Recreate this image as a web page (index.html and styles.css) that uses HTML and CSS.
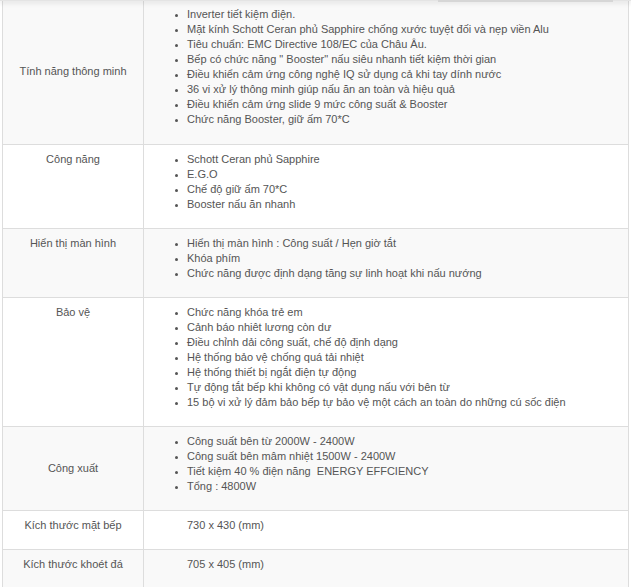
FILE: index.html
```html
<!DOCTYPE html>
<html lang="vi">
<head>
  <meta charset="UTF-8">
  <title>Thông số kỹ thuật</title>
  <link rel="stylesheet" href="styles.css">
</head>
<body>

  <div class="top-shadow">
    <span class="top-tab"></span>
  </div>

  <div class="specs">
    <table class="spec-table">
      <tbody>
        <tr class="first">
          <td class="label middle">Tính năng thông minh</td>
          <td class="value">
            <ul>
              <li>Inverter tiết kiệm điện.</li>
              <li>Mặt kính Schott Ceran phủ Sapphire chống xước tuyệt đối và nẹp viền Alu</li>
              <li>Tiêu chuẩn: EMC Directive 108/EC của Châu Âu.</li>
              <li>Bếp có chức năng " Booster" nấu siêu nhanh tiết kiệm thời gian</li>
              <li>Điều khiển cảm ứng công nghệ IQ sử dụng cả khi tay dính nước</li>
              <li>36 vi xử lý thông minh giúp nấu ăn an toàn và hiệu quả</li>
              <li>Điều khiển cảm ứng slide 9 mức công suất &amp; Booster</li>
              <li>Chức năng Booster, giữ ấm 70*C</li>
            </ul>
          </td>
        </tr>
        <tr>
          <td class="label">Công năng</td>
          <td class="value">
            <ul>
              <li>Schott Ceran phủ Sapphire</li>
              <li>E.G.O</li>
              <li>Chế độ giữ ấm 70*C</li>
              <li>Booster nấu ăn nhanh</li>
            </ul>
          </td>
        </tr>
        <tr>
          <td class="label">Hiển thị màn hình</td>
          <td class="value">
            <ul>
              <li>Hiển thị màn hình : Công suất / Hẹn giờ tắt</li>
              <li>Khóa phím</li>
              <li>Chức năng được định dạng tăng sự linh hoạt khi nấu nướng</li>
            </ul>
          </td>
        </tr>
        <tr>
          <td class="label">Bảo vệ</td>
          <td class="value">
            <ul>
              <li>Chức năng khóa trẻ em</li>
              <li>Cảnh báo nhiêt lương còn dư</li>
              <li>Điều chỉnh dải công suất, chế độ định dạng</li>
              <li>Hệ thống bảo vệ chống quá tải nhiệt</li>
              <li>Hệ thống thiết bị ngắt điện tự động</li>
              <li>Tự động tắt bếp khi không có vật dụng nấu với bên từ</li>
              <li>15 bộ vi xử lý đảm bảo bếp tự bảo vệ một cách an toàn do những cú sốc điện</li>
            </ul>
          </td>
        </tr>
        <tr>
          <td class="label middle">Công xuất</td>
          <td class="value">
            <ul>
              <li>Công suất bên từ 2000W - 2400W</li>
              <li>Công suất bên mâm nhiệt 1500W - 2400W</li>
              <li>Tiết kiệm 40 % điện năng &nbsp;ENERGY EFFCIENCY</li>
              <li>Tổng : 4800W</li>
            </ul>
          </td>
        </tr>
        <tr>
          <td class="label">Kích thước mặt bếp</td>
          <td class="value"><p>730 x 430 (mm)</p></td>
        </tr>
        <tr>
          <td class="label">Kích thước khoét đá</td>
          <td class="value"><p>705 x 405 (mm)</p></td>
        </tr>
      </tbody>
    </table>
  </div>

</body>
</html>
```

FILE: styles.css
```css
* {
  box-sizing: border-box;
  margin: 0;
  padding: 0;
}

body {
  background-color: #fff;
  font-family: "Liberation Sans", Arial, sans-serif;
  font-size: 11px;
  line-height: 15px;
  color: #555;
}

/* Shadow of the fixed header above the page */
.top-shadow {
  position: fixed;
  top: 0;
  left: 0;
  right: 0;
  height: 1px;
  background-color: #e4e4e4;
  box-shadow: 0 1px 5px 1px rgba(0, 0, 0, 0.12);
  z-index: 10;
}

.top-tab {
  position: absolute;
  top: 0;
  left: 438px;
  width: 175px;
  height: 2px;
  background-color: #d6d6d6;
}

/* Spec table */
.specs {
  padding-left: 2px;
  margin-top: -1px;
}

.spec-table {
  width: 627px;
  border-collapse: collapse;
}

.spec-table td {
  border: 1px solid #ddd;
  padding: 7px 8px;
  vertical-align: top;
}

.spec-table tr.first td {
  padding-bottom: 8px;
}

.spec-table tr:nth-child(odd) td {
  background-color: #f9f9f9;
}

.spec-table .label {
  width: 141px;
  text-align: center;
}

.spec-table .label.middle {
  vertical-align: middle;
}

.spec-table .value {
  padding-left: 43px;
}

.spec-table ul {
  list-style: disc outside;
  margin-bottom: 9px;
}

.spec-table li::marker {
  font-size: 9px;
}

.spec-table p {
  margin-bottom: 9px;
}
```
